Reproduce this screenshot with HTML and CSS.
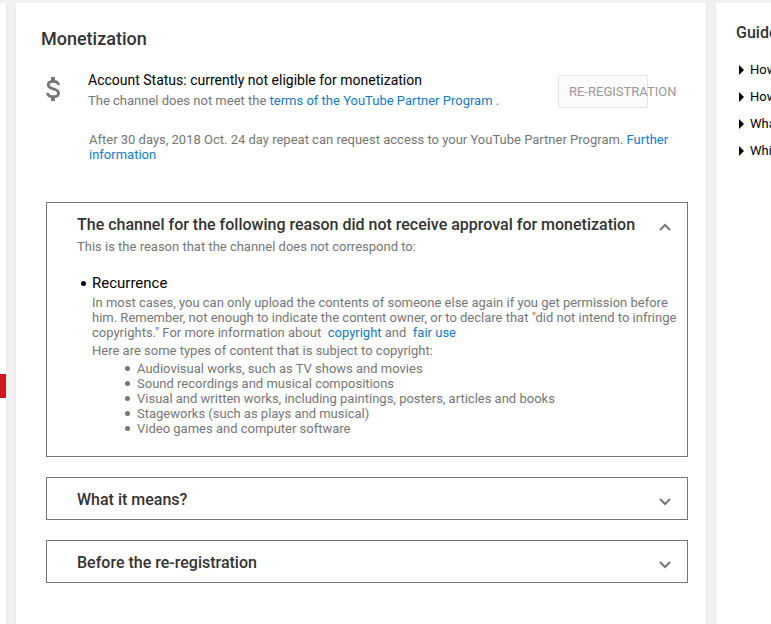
FILE: index.html
```html
<!DOCTYPE html>
<html lang="en">
<head>
    <meta charset="UTF-8">
    <meta name="viewport" content="width=device-width, initial-scale=1.0">
    <title>Monetization</title>
    <link rel="stylesheet" href="styles.css">
</head>
<body>
    <div class="page">
        <nav class="menu">
            <div class="menu-active"></div>
        </nav>
        <main class="content">
            <h1>Monetization</h1>
            <div class="status">
                <svg class="dollar" viewBox="0 0 14 24" width="14" height="24">
                    <path fill="none" stroke="#767676" stroke-width="2.8" d="M12.4 8C12.4 5.5 10.4 4.3 7.3 4.3C4.3 4.3 2.2 5.5 2.2 7.7C2.2 10.1 4.3 11 7.2 11.8C10.4 12.6 12.5 13.7 12.5 16.2C12.5 18.5 10.3 19.7 7.3 19.7C3.9 19.7 1.6 18.3 1.5 15.8"/>
                    <path fill="none" stroke="#767676" stroke-width="4" d="M7 0V4M7 20V24"/>
                </svg>
                <div class="status-text">
                    <h2 class="status-title">Account Status: currently not eligible for monetization</h2>
                    <p>The channel does not meet the <a href="#">terms of the YouTube Partner Program</a> .</p>
                </div>
                <button type="button" class="register-btn" disabled>RE-REGISTRATION</button>
            </div>
            <p class="note">After 30 days, 2018 Oct. 24 day repeat can request access to your YouTube Partner Program. <a href="#">Further information</a></p>

            <section class="card">
                <button type="button" class="card-head" aria-expanded="true">
                    <span>The channel for the following reason did not receive approval for monetization</span>
                    <svg viewBox="0 0 12 8" width="12" height="8"><path d="M1 7L6 2L11 7"/></svg>
                </button>
                <div class="card-body">
                    <p>This is the reason that the channel does not correspond to:</p>
                    <ul class="reasons">
                        <li>
                            <h3>Recurrence</h3>
                            <p>In most cases, you can only upload the contents of someone else again if you get permission before him. Remember, not enough to indicate the content owner, or to declare that "did not intend to infringe copyrights." For more information about &nbsp;<a href="#">copyright</a> and &nbsp;<a href="#">fair use</a></p>
                            <p>Here are some types of content that is subject to copyright:</p>
                            <ul class="types">
                                <li>Audiovisual works, such as TV shows and movies</li>
                                <li>Sound recordings and musical compositions</li>
                                <li>Visual and written works, including paintings, posters, articles and books</li>
                                <li>Stageworks (such as plays and musical)</li>
                                <li>Video games and computer software</li>
                            </ul>
                        </li>
                    </ul>
                </div>
            </section>

            <section class="card">
                <button type="button" class="card-head" aria-expanded="false">
                    <span>What it means?</span>
                    <svg viewBox="0 0 12 8" width="12" height="8"><path d="M1 1L6 6L11 1"/></svg>
                </button>
            </section>

            <section class="card">
                <button type="button" class="card-head" aria-expanded="false">
                    <span>Before the re-registration</span>
                    <svg viewBox="0 0 12 8" width="12" height="8"><path d="M1 1L6 6L11 1"/></svg>
                </button>
            </section>
        </main>
        <aside class="guide">
            <h2>Guide</h2>
            <ul>
                <li>How</li>
                <li>How</li>
                <li>What</li>
                <li>Which</li>
            </ul>
        </aside>
    </div>
</body>
</html>
```

FILE: styles.css
```css
* {
    box-sizing: border-box;
}
body {
    margin: 0;
    background-color: #f1f1f1;
    color: #767676;
    font-family: Roboto, Arial, sans-serif;
    font-size: 13px;
    line-height: 15px;
}
h1, h2, h3, p, ul {
    margin: 0;
    padding: 0;
}
a {
    color: #167ac6;
    text-decoration: none;
}
button {
    font-family: inherit;
}
.page {
    display: flex;
    gap: 10px;
    min-height: 100vh;
    padding-top: 3px;
    overflow: hidden;
}
.menu, .content, .guide {
    background-color: #fff;
    box-shadow: 0 1px 2px rgba(0, 0, 0, 0.1);
}
.menu {
    flex: 0 0 6px;
    padding-top: 371px;
}
.menu-active {
    height: 24px;
    background-color: #cc181e;
}
.content {
    flex: 1;
    min-width: 0;
    padding: 26px 18px 26px 30px;
}
h1 {
    margin-left: -5px;
    color: #333;
    font-size: 18px;
    font-weight: 500;
    line-height: 20px;
}

/* account status */
.status {
    display: flex;
    align-items: flex-start;
    margin-top: 21px;
    padding-right: 40px;
}
.dollar {
    margin-top: 7px;
}
.status-text {
    flex: 1;
    margin-left: 28px;
}
.status-title {
    margin-bottom: 3px;
    color: #000;
    font-size: 14px;
    font-weight: 400;
    line-height: 20px;
}
.register-btn {
    width: 90px;
    height: 33px;
    margin-top: 5px;
    padding: 0 10px;
    border: 1px solid #e6e6e6;
    border-radius: 2px;
    background-color: #fbfbfb;
    color: #999;
    font-size: 13px;
    text-align: left;
    white-space: nowrap;
}
.note {
    margin: 24px 0 40px 43px;
}

/* cards */
.card {
    margin-bottom: 20px;
    border: 1px solid #767676;
}
.card-head {
    display: flex;
    justify-content: space-between;
    align-items: center;
    width: 100%;
    padding: 12px 16px 9px 30px;
    border: 0;
    background: none;
    color: #333;
    font-size: 16px;
    font-weight: 500;
    line-height: 20px;
    text-align: left;
}
.card-head svg {
    margin-top: 3px;
    fill: none;
    stroke: #767676;
    stroke-width: 2;
}
.card-body {
    padding: 0 10px 20px 30px;
    margin-top: -5px;
}
.reasons {
    margin-top: 19px;
    list-style: none;
}
.reasons > li {
    padding-left: 15px;
}
.reasons p {
    margin-bottom: 3px;
}
h3 {
    display: flex;
    align-items: center;
    margin-bottom: 2px;
    color: #000;
    font-size: 15px;
    font-weight: 400;
    line-height: 20px;
}
h3::before {
    content: "";
    width: 5px;
    height: 5px;
    margin: 1px 6px 0 -11px;
    border-radius: 50%;
    background-color: #000;
}
.types {
    list-style: none;
    padding-left: 33px;
}
.types li {
    display: flex;
    align-items: center;
}
.types li::before {
    content: "";
    width: 5px;
    height: 5px;
    margin-right: 7px;
    border-radius: 50%;
    background-color: #767676;
}

/* guide column */
.guide {
    flex: 0 0 55px;
    padding: 20px 0 0 20px;
    overflow: hidden;
    white-space: nowrap;
}
.guide h2 {
    color: #333;
    font-size: 16px;
    font-weight: 500;
    line-height: 20px;
}
.guide ul {
    margin-top: 17px;
    color: #000;
    list-style: none;
}
.guide li {
    display: flex;
    align-items: center;
    margin-left: 3px;
    line-height: 20px;
    margin-bottom: 7px;
}
.guide li::before {
    content: "";
    margin-right: 6px;
    border: 5px solid transparent;
    border-left-color: #000;
    border-right-width: 0;
}
```
